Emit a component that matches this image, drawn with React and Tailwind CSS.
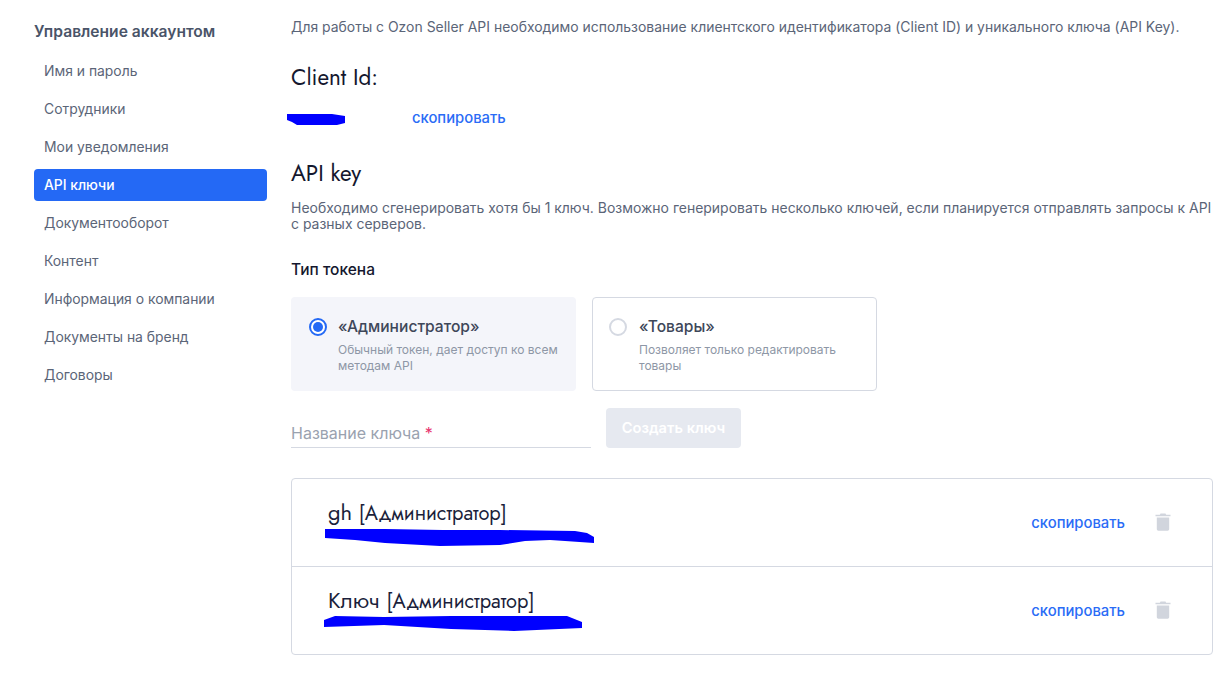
import React from 'react'

const font = { inter: 'font-["Inter",sans-serif]' }
const menu = ['Имя и пароль', 'Сотрудники', 'Мои уведомления', 'API ключи', 'Документооборот', 'Контент', 'Информация о компании', 'Документы на бренд', 'Договоры']

function Trash() {
  return (
    <svg width="16" height="18" viewBox="0 0 16 18" className="block">
      <path d="M5.5 0.5h5l.6 1.2H15.5v1.6H.5V1.7h4.4z" fill="#d1d5dd" />
      <path d="M1.8 4.5h12.4v11.6c0 1-.7 1.6-1.6 1.6H3.4c-.9 0-1.6-.6-1.6-1.6z" fill="#d1d5dd" />
    </svg>
  )
}

function Scribble({ d, width, height, className }) {
  return (
    <svg width={width} height={height} viewBox={`0 0 ${width} ${height}`} className={className}>
      <path d={d} fill="#0000ff" />
    </svg>
  )
}

function KeyRow({ name, scribble, last }) {
  return (
    <div className={`flex items-start justify-between pl-[36px] pr-[41px] ${last ? 'h-[87px]' : 'h-[88px] border-b border-[#d5d9e2]'}`}>
      <div className="relative">
        <div className='mt-[18px] font-["Jost","Lato","Noto_Sans",sans-serif] text-[22px] leading-[30px] text-[#1b1f3b]'>
          {name} <span className="text-[20px]">[Администратор]</span>
        </div>
        {scribble}
      </div>
      <div className="mt-[35px] flex items-center">
        <a className="text-[14.8px] font-medium leading-[18px] text-[#2a6cf6]">скопировать</a>
        <span className="ml-[30px] mt-[-2px]"><Trash /></span>
      </div>
    </div>
  )
}

export default function App() {
  return (
    <div className={`flex min-h-[676px] bg-white ${font.inter}`}>
      <aside className="ml-[34px] w-[233px] shrink-0 pt-[22px]">
        <h2 className="mb-[13px] text-[15.6px] font-semibold leading-5 text-[#4a5468]">Управление аккаунтом</h2>
        <nav className="flex flex-col gap-[6px]">
          {menu.map((item) => (
            <a
              key={item}
              className={`flex h-8 items-center rounded px-[10px] text-[13.9px] ${item === 'API ключи' ? 'bg-[#2469f5] font-medium text-white' : 'text-[#5b6578]'}`}
            >
              {item}
            </a>
          ))}
        </nav>
      </aside>

      <main className="ml-[24px] w-[922px] shrink-0 pt-[18px]">
        <p className="text-[13.95px] leading-[18px] text-[#5b6578]">
          Для работы с Ozon Seller API необходимо использование клиентского идентификатора (Client ID) и уникального ключа (API Key).
        </p>
        <h3 className='mt-[26px] font-["Jost","Lato",sans-serif] text-[22.5px] leading-[30px] text-[#14172e]'>Client Id:</h3>
        <div className="mt-[16px] flex h-[20px] items-center">
          <Scribble
            width={59}
            height={11}
            className="ml-[-4px] mt-[2px]"
            d="M0 0 L45 0 L58 2 L58 9 L50 11 L10 11 L5 8 L0 6 Z"
          />
          <a className="ml-[66px] text-[14.8px] font-medium text-[#2a6cf6]">скопировать</a>
        </div>
        <h3 className='mt-[30px] font-["Jost","Lato",sans-serif] text-[22.5px] leading-[30px] text-[#14172e]'>API key</h3>
        <p className="mt-[12px] text-[13.98px] leading-4 text-[#5b6578]">
          Необходимо сгенерировать хотя бы 1 ключ. Возможно генерировать несколько ключей, если планируется отправлять запросы к API
          <br />с разных серверов.
        </p>
        <div className="mt-[28px] text-[15.5px] font-medium leading-5 text-[#14172e]">Тип токена</div>

        <div className="mt-[17px] flex gap-[16px]">
          <label className="flex h-[94px] w-[285px] rounded bg-[#f4f5fa] pl-[18px] pt-[21px]">
            <span className="flex size-[18px] items-center justify-center rounded-full border-2 border-[#2469f5] bg-white">
              <span className="size-[10px] rounded-full bg-[#2469f5]" />
            </span>
            <span className="ml-[11px]">
              <span className="block text-[15.6px] font-medium leading-[18px] text-[#3e4759]">«Администратор»</span>
              <span className="mt-[6px] block w-[230px] text-[12px] leading-4 text-[#8e97a6]">Обычный токен, дает доступ ко всем методам API</span>
            </span>
          </label>
          <label className="flex h-[94px] w-[285px] rounded border border-[#d5d9e2] pl-[16px] pt-[20px]">
            <span className="size-[18px] rounded-full border-2 border-[#d5d9e2] bg-white" />
            <span className="ml-[12px]">
              <span className="block text-[15.6px] font-medium leading-[18px] text-[#3e4759]">«Товары»</span>
              <span className="mt-[6px] block w-[210px] text-[12px] leading-4 text-[#8e97a6]">Позволяет только редактировать товары</span>
            </span>
          </label>
        </div>

        <div className="mt-[17px] flex items-start gap-[15px]">
          <div className="mt-[10px] h-[30px] w-[300px] border-b border-[#d5d9e2] text-base leading-[30px] text-[#9aa2af]">
            Название ключа <span className="text-[#e8336e]">*</span>
          </div>
          <button className="h-10 w-[135px] rounded-sm bg-[#e6e9f0] text-[14.7px] font-semibold text-white">Создать ключ</button>
        </div>

        <div className="mt-[30px] rounded border border-[#d5d9e2]">
          <KeyRow
            name="gh"
            scribble={
              <Scribble
                width={270}
                height={18}
                className="absolute left-[-3px] top-[49px]"
                d="M0 1 L60 1 L118 2 L175 2 L250 3 L262 5 L269 9 L269 15 L240 13 L225 12 L200 13 L175 17 L115 18 L60 15 L30 12 L0 10 Z"
              />
            }
          />
          <KeyRow
            name="Ключ"
            last
            scribble={
              <Scribble
                width={260}
                height={16}
                className="absolute left-[-4px] top-[49px]"
                d="M0 4 L11 0 L60 1 L127 0 L243 0 L258 6 L258 12 L190 15 L127 13 L60 9 L0 11 Z"
              />
            }
          />
        </div>
      </main>
    </div>
  )
}
